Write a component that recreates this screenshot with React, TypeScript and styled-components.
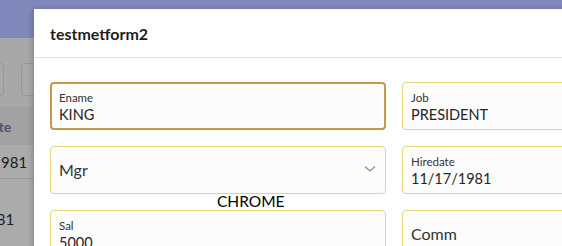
import React from "react";
import styled, { createGlobalStyle } from "styled-components";

const Global = createGlobalStyle`
  html, body { margin: 0; padding: 0; }
  body {
    width: 562px; height: 246px; overflow: hidden;
    font-family: "Segoe UI", Lato, "Open Sans", sans-serif;
    background: #a8a8a8;
  }
`;

const Page = styled.div`
  position: relative;
  width: 562px;
  height: 246px;
  overflow: hidden;
  background: #a8a8a8;
`;

const TopBar = styled.div`
  height: 38px;
  background: #8088bc;
`;

const Toolbar = styled.div`
  display: flex;
  gap: 17px;
  padding: 25px 0 0 0;
  height: 35px;
  margin-left: -24px;
`;

const ToolButton = styled.div`
  width: 28px;
  height: 33px;
  box-sizing: border-box;
  border: 1px solid #999;
  border-radius: 3px;
  background: #a9a9a9;
`;

const TableHead = styled.div`
  margin-top: 9px;
  height: 38px;
  display: flex;
  align-items: center;
  background: #a2a2a2;
  font-weight: 700;
  font-size: 14px;
  color: #4b4f78;
  white-space: nowrap;
`;

const TableRow = styled.div<{ $h: number }>`
  height: ${(p) => p.$h}px;
  display: flex;
  align-items: center;
  background: #ababab;
  border-bottom: 1px solid #989898;
  font-size: 15px;
  color: #1c1c1c;
  white-space: nowrap;
`;

const CutText = styled.span<{ $shift: number }>`
  margin-left: ${(p) => p.$shift}px;
`;

const Modal = styled.div`
  position: absolute;
  left: 34px;
  top: 9px;
  width: 620px;
  height: 300px;
  background: #ffffff;
  box-shadow: -2px 0 5px rgba(0, 0, 0, 0.18);
`;

const ModalHeader = styled.div`
  height: 48px;
  display: flex;
  align-items: center;
  padding-left: 16px;
  border-bottom: 1px solid #e3e3e3;
  font-size: 16px;
  font-weight: 700;
  color: #1e1e1e;
`;

const FormGrid = styled.div`
  display: grid;
  grid-template-columns: 336px 336px;
  column-gap: 16px;
  row-gap: 16px;
  padding: 24px 16px;
`;

const Field = styled.div<{ $focused?: boolean }>`
  box-sizing: border-box;
  height: 48px;
  border-radius: 4px;
  background: #fcfcfc;
  border: ${(p) => (p.$focused ? "2px solid #c49a48" : "1px solid #ebd37a")};
  padding: ${(p) => (p.$focused ? "8px 7px 4px" : "9px 8px 5px")};
  display: flex;
  flex-direction: column;
  justify-content: center;
  position: relative;
`;

const Label = styled.div`
  font-size: 11.5px;
  line-height: 14px;
  color: #333;
`;

const Value = styled.div`
  font-size: 14.5px;
  line-height: 20px;
  color: #262626;
`;

const Placeholder = styled.div`
  font-size: 16px;
  color: #333;
  margin-top: -5px;
`;

const Chevron = styled.svg`
  position: absolute;
  right: 9px;
  top: 18px;
`;

const Stamp = styled.div`
  position: absolute;
  left: 183px;
  top: 183px;
  font-size: 15.5px;
  color: #000;
`;

export default function App() {
  return (
    <>
      <Global />
      <Page>
        <TopBar />
        <Toolbar>
          <ToolButton />
          <ToolButton />
        </Toolbar>
        <TableHead>
          <CutText $shift={-43}>Hiredate</CutText>
        </TableHead>
        <TableRow $h={33}>
          <CutText $shift={-56}>11/17/1981</CutText>
        </TableRow>
        <TableRow $h={80}>
          <CutText $shift={-69}>11/17/1981</CutText>
        </TableRow>
        <Modal>
          <ModalHeader>testmetform2</ModalHeader>
          <FormGrid>
            <Field $focused>
              <Label>Ename</Label>
              <Value>KING</Value>
            </Field>
            <Field>
              <Label>Job</Label>
              <Value>PRESIDENT</Value>
            </Field>
            <Field>
              <Placeholder>Mgr</Placeholder>
              <Chevron width="12" height="8" viewBox="0 0 12 8">
                <path d="M1 1.5 L6 6 L11 1.5" fill="none" stroke="#8a8a8a" strokeWidth="1.2" />
              </Chevron>
            </Field>
            <Field>
              <Label>Hiredate</Label>
              <Value>11/17/1981</Value>
            </Field>
            <Field>
              <Label>Sal</Label>
              <Value>5000</Value>
            </Field>
            <Field>
              <Placeholder>Comm</Placeholder>
            </Field>
          </FormGrid>
          <Stamp>CHROME</Stamp>
        </Modal>
      </Page>
    </>
  );
}
